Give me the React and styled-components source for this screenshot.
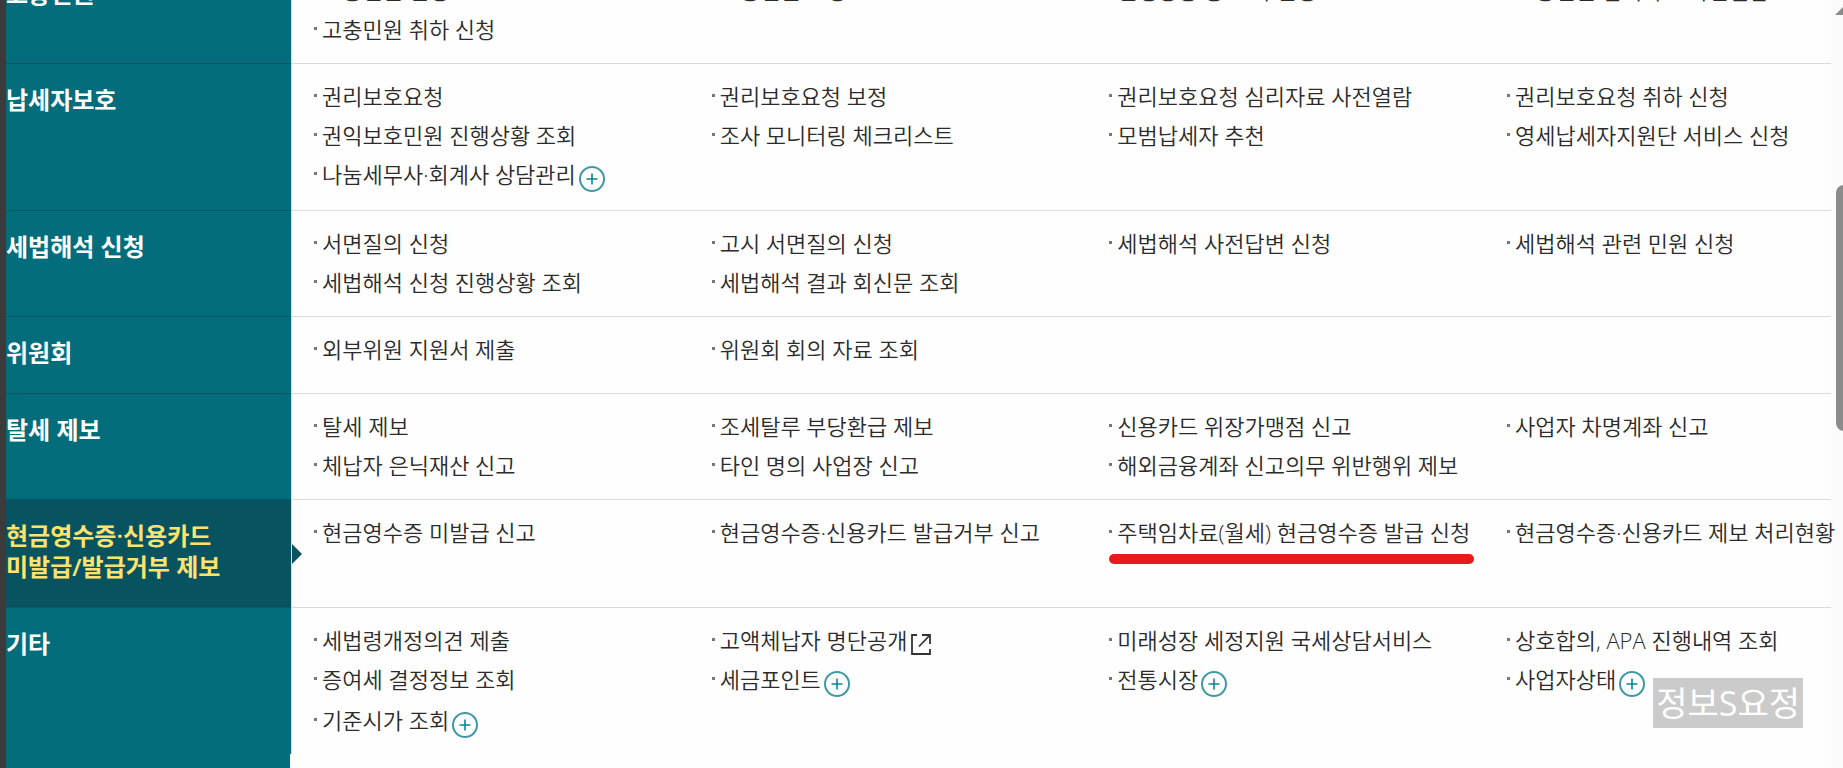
import React from "react";
import styled, { createGlobalStyle } from "styled-components";

const categories = [
  {
    title: ["고충민원"],
    columns: [
      [{ text: "고충민원 신청" }, { text: "고충민원 취하 신청" }],
      [{ text: "고충민원 보정" }],
      [{ text: "진행상황 등 조회 신청" }],
      [{ text: "고충민원 심리자료 사전열람" }]
    ]
  },
  {
    title: ["납세자보호"],
    columns: [
      [
        { text: "권리보호요청" },
        { text: "권익보호민원 진행상황 조회" },
        { text: "나눔세무사·회계사 상담관리", icon: "plus" }
      ],
      [{ text: "권리보호요청 보정" }, { text: "조사 모니터링 체크리스트" }],
      [{ text: "권리보호요청 심리자료 사전열람" }, { text: "모범납세자 추천" }],
      [
        { text: "권리보호요청 취하 신청" },
        { text: "영세납세자지원단 서비스 신청" }
      ]
    ]
  },
  {
    title: ["세법해석 신청"],
    columns: [
      [{ text: "서면질의 신청" }, { text: "세법해석 신청 진행상황 조회" }],
      [{ text: "고시 서면질의 신청" }, { text: "세법해석 결과 회신문 조회" }],
      [{ text: "세법해석 사전답변 신청" }],
      [{ text: "세법해석 관련 민원 신청" }]
    ]
  },
  {
    title: ["위원회"],
    columns: [
      [{ text: "외부위원 지원서 제출" }],
      [{ text: "위원회 회의 자료 조회" }]
    ]
  },
  {
    title: ["탈세 제보"],
    columns: [
      [{ text: "탈세 제보" }, { text: "체납자 은닉재산 신고" }],
      [{ text: "조세탈루 부당환급 제보" }, { text: "타인 명의 사업장 신고" }],
      [
        { text: "신용카드 위장가맹점 신고" },
        { text: "해외금융계좌 신고의무 위반행위 제보" }
      ],
      [{ text: "사업자 차명계좌 신고" }]
    ]
  },
  {
    title: ["현금영수증·신용카드", "미발급/발급거부 제보"],
    active: true,
    columns: [
      [{ text: "현금영수증 미발급 신고" }],
      [{ text: "현금영수증·신용카드 발급거부 신고" }],
      [{ text: "주택임차료(월세) 현금영수증 발급 신청", marked: true }],
      [{ text: "현금영수증·신용카드 제보 처리현황" }]
    ]
  },
  {
    title: ["기타"],
    columns: [
      [
        { text: "세법령개정의견 제출" },
        { text: "증여세 결정정보 조회", tall: true },
        { text: "기준시가 조회", icon: "plus" }
      ],
      [
        { text: "고액체납자 명단공개", icon: "external" },
        { text: "세금포인트", icon: "plus" }
      ],
      [
        { text: "미래성장 세정지원 국세상담서비스" },
        { text: "전통시장", icon: "plus" }
      ],
      [
        { text: "상호합의, APA 진행내역 조회" },
        { text: "사업자상태", icon: "plus" }
      ]
    ]
  }
];

const PlusIcon = () => (
  <Icon width="26" height="26" viewBox="0 0 26 26" aria-hidden="true">
    <circle cx="13" cy="13" r="12" stroke="#3d9aa5" strokeWidth="2" />
    <path d="M13 7.500v11M7.500 13h11" stroke="#0b8595" strokeWidth="1.6" />
  </Icon>
);

const ExternalIcon = () => (
  <Icon width="20" height="26" viewBox="0 0 20 26" aria-hidden="true">
    <path
      d="M6 3H1v19h18v-5M11 3h8v9M18.500 3.500L8 14.500"
      stroke="#333"
      strokeWidth="1.8"
    />
  </Icon>
);

const MenuItem = ({ text, icon, marked, tall }) => (
  <Item $tall={tall || icon === "plus"}>
    <ItemLink href="#">{text}</ItemLink>
    {icon === "plus" && <PlusIcon />}
    {icon === "external" && <ExternalIcon />}
    {marked && <Marker />}
  </Item>
);

const Category = ({ title, columns, active }) => (
  <Row>
    <Label $active={active}>
      {title.map(line => (
        <LabelLine key={line}>{line}</LabelLine>
      ))}
    </Label>
    <Columns>
      {columns.map((items, i) => (
        <List key={i}>
          {items.map(item => (
            <MenuItem key={item.text} {...item} />
          ))}
        </List>
      ))}
    </Columns>
  </Row>
);

const App = () => (
  <Page>
    <GlobalStyle />
    <Edge />
    <Menu>
      {categories.map(category => (
        <Category key={category.title[0]} {...category} />
      ))}
      <MenuEnd />
    </Menu>
    <Scrollbar aria-hidden="true">
      <ScrollArrow width="16" height="8" viewBox="0 0 16 8">
        <path d="M8 0l8 8H0z" fill="#8b8b8b" />
      </ScrollArrow>
      <ScrollThumb />
    </Scrollbar>
    <Watermark>정보S요정</Watermark>
  </Page>
);

const GlobalStyle = createGlobalStyle`
  * {
    box-sizing: border-box;
  }

  body {
    margin: 0;
    background-color: #fefefe;
    color: #2b2b2b;
    font-family: "Open Sans", "Noto Sans CJK KR", sans-serif;
    font-size: 22px;
    font-weight: 350;
  }
`;

const Page = styled.div`
  position: relative;
  display: flex;
  height: 100vh;
  overflow: hidden;
`;

const Edge = styled.div`
  flex: 0 0 6px;
  background-color: #3c3a3a;
`;

const Menu = styled.nav`
  display: flex;
  flex-direction: column;
  flex: 1;
  min-width: 0;
  margin-top: -42px;
`;

const Row = styled.section`
  display: flex;
  flex-shrink: 0;
  border-bottom: 1px solid #dadada;

  &:last-of-type {
    border-bottom: 0;
  }
`;

const Label = styled.h2`
  position: relative;
  flex: 0 0 285px;
  margin: 0 0 -1px;
  padding: 20px 0 25px;
  border-bottom: 1px solid #0b5660;
  background-color: ${props => (props.$active ? "#07535f" : "#036d7b")};
  color: ${props => (props.$active ? "#ffe36e" : "#fff")};
  font-size: 24px;
  font-weight: 600;
  line-height: 31px;

  ${Row}:last-of-type & {
    margin: 0;
    border-bottom: 0;
  }

  &::after {
    content: "";
    display: ${props => (props.$active ? "block" : "none")};
    position: absolute;
    top: 50%;
    left: 100%;
    margin: -10px 0 0 1px;
    border: solid transparent;
    border-width: 10px 0 10px 10px;
    border-left-color: #07535f;
  }
`;

const LabelLine = styled.span`
  display: block;
  white-space: nowrap;
`;

const Columns = styled.div`
  display: grid;
  grid-template-columns: repeat(3, 1fr) 324px;
  flex: 1;
  min-width: 0;
  padding: 13px 0 14px 22px;
  border-left: 1px solid #dadada;

  ${Row}:last-of-type & {
    padding-bottom: 12px;
  }
`;

const List = styled.ul`
  margin: 0;
  padding: 0;
  list-style: none;
`;

const Item = styled.li`
  position: relative;
  display: flex;
  align-items: flex-start;
  width: max-content;
  height: ${props => (props.$tall ? 41 : 39)}px;
  padding-left: 8px;
  white-space: nowrap;

  &::before {
    content: "";
    position: absolute;
    top: 17px;
    left: 0;
    width: 3px;
    height: 3px;
    background-color: #777;
  }
`;

const ItemLink = styled.a`
  color: inherit;
  line-height: 39px;
  text-decoration: none;
`;

const Icon = styled.svg`
  flex: none;
  margin: 11px 0 0 3px;
  fill: none;
`;

const Marker = styled.span`
  position: absolute;
  top: 41px;
  left: 0;
  right: -4px;
  height: 10px;
  border-radius: 5px;
  background-color: #e61b1b;
`;

const MenuEnd = styled.div`
  flex: 1;
  width: 284px;
  background-color: #036d7b;
`;

const Scrollbar = styled.div`
  flex: 0 0 12px;
  overflow: hidden;
  background-color: #fbfbfb;
`;

const ScrollArrow = styled.svg`
  display: block;
  margin: 7px 0 0 4px;
`;

const ScrollThumb = styled.div`
  width: 16px;
  height: 246px;
  margin: 170px 0 0 5px;
  border-radius: 8px;
  background-color: #8b8b8b;
`;

const Watermark = styled.div`
  position: absolute;
  right: 40px;
  bottom: 40px;
  padding: 0 3px;
  background-color: #cbcbcb;
  color: #fff;
  font-size: 34px;
  font-weight: 400;
  line-height: 50px;
`;

export default App;
